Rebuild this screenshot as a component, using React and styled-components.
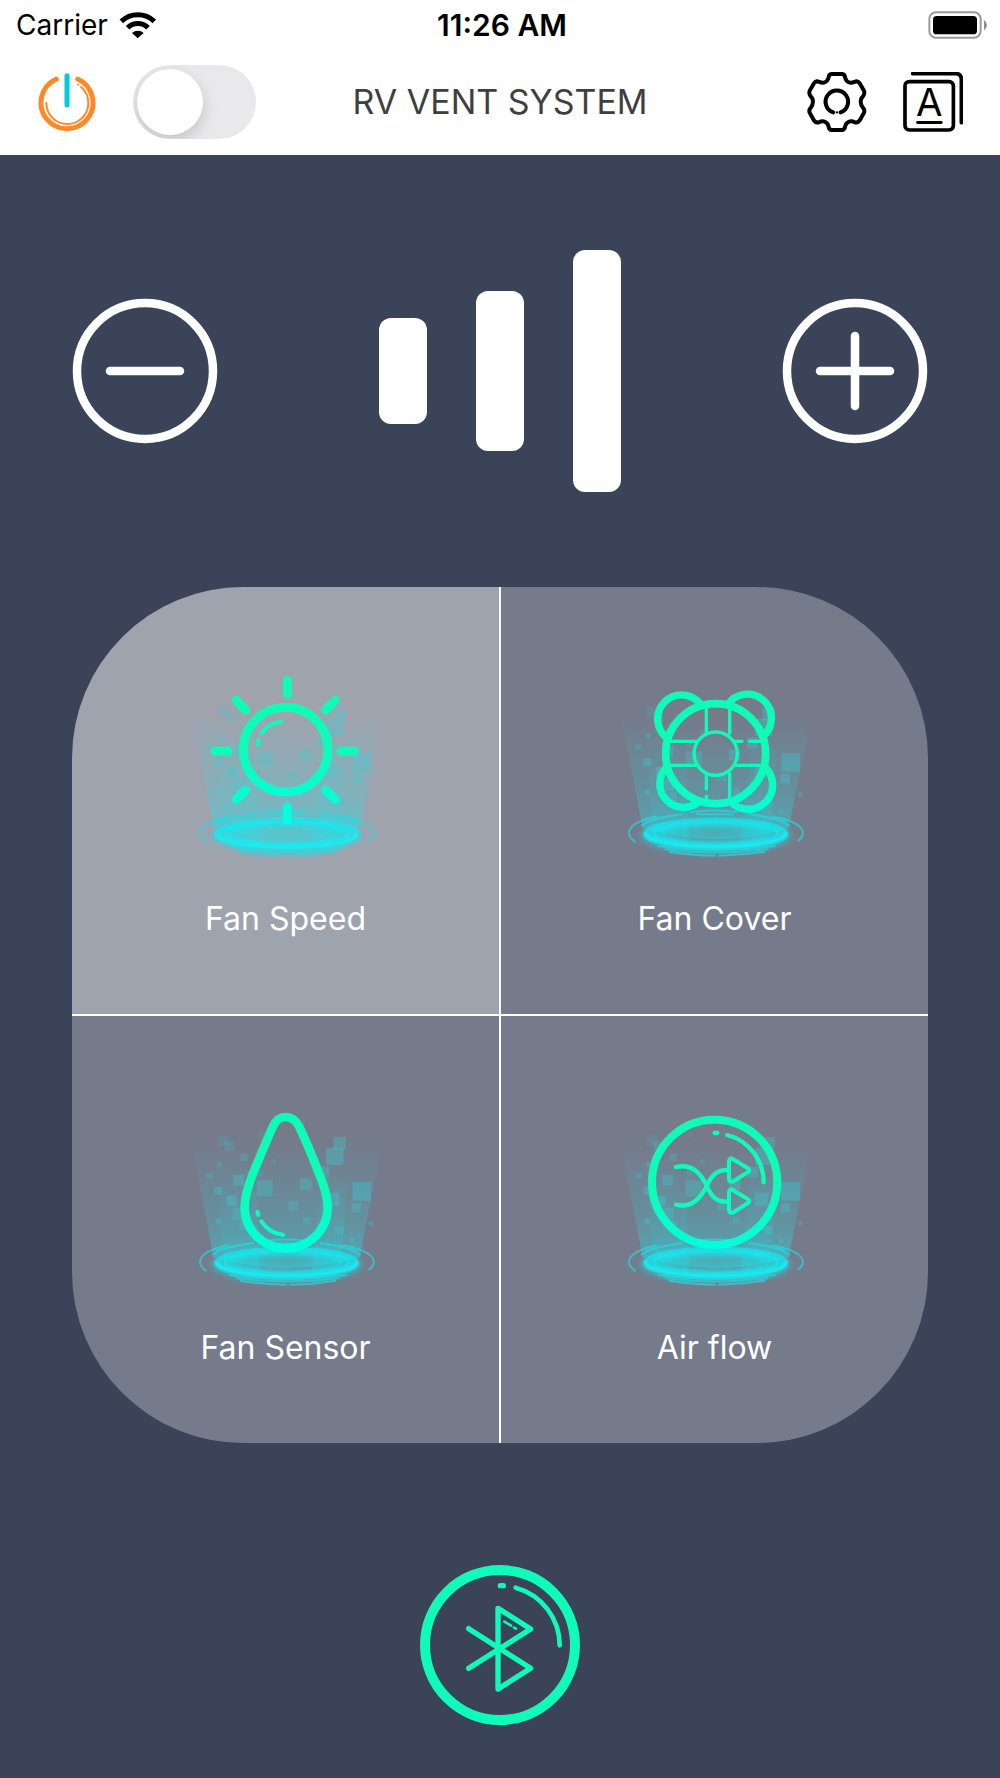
import React, { useState } from 'react';
import styled, { createGlobalStyle } from 'styled-components';

const GlobalStyle = createGlobalStyle`
    * {
        box-sizing: border-box;
    }

    body {
        margin: 0;
        background-color: #3b4358;
        font-family: Inter, "Liberation Sans", sans-serif;
    }

    button {
        padding: 0;
        border: 0;
        background: none;
        color: inherit;
        font: inherit;
        cursor: pointer;
    }

    svg {
        display: block;
        flex: none;
    }
`;

const Page = styled.div`
    display: flex;
    flex-direction: column;
    min-height: 100vh;
    background-color: #3b4358;
`;

const Top = styled.header`
    padding-bottom: 1px;
    background-color: #fff;
`;

const StatusBar = styled.div`
    display: grid;
    grid-template-columns: 1fr auto 1fr;
    align-items: center;
    height: 50px;
    padding: 0 12px 0 16px;
    color: #000;
    font-size: 28px;
    line-height: 32px;
`;

const Carrier = styled.div`
    display: flex;
    align-items: center;
    gap: 11px;
`;

const Clock = styled.time`
    font-size: 30px;
    font-weight: 600;
`;

const BatterySlot = styled.div`
    display: flex;
    justify-content: flex-end;
`;

const Nav = styled.nav`
    display: grid;
    grid-template-columns: 1fr auto 1fr;
    align-items: center;
    height: 104px;
    padding: 0 37px;
`;

const NavSide = styled.div`
    display: flex;
    align-items: center;
    justify-content: ${(props) => (props.$end ? 'flex-end' : 'flex-start')};
    gap: 36px;
`;

const Title = styled.h1`
    margin: 0;
    color: #3f3f3f;
    font-size: 34px;
    font-weight: 400;
    line-height: 44px;
`;

const Switch = styled.input`
    appearance: none;
    display: flex;
    align-items: center;
    width: 123px;
    height: 74px;
    margin: 0;
    padding: 0 4px;
    border-radius: 37px;
    background-color: ${(props) => (props.checked ? '#0fffb9' : '#e9e9eb')};
    overflow: hidden;
    cursor: pointer;

    &::before {
        content: '';
        width: 66px;
        height: 66px;
        margin-left: ${(props) => (props.checked ? 'auto' : '0')};
        border-radius: 50%;
        background-color: #fff;
        box-shadow: 0 6px 16px rgba(0, 0, 0, 0.16);
    }
`;

const Level = styled.section`
    display: flex;
    align-items: center;
    justify-content: space-between;
    height: 432px;
    padding: 0 72px;
`;

const Bars = styled.div`
    display: flex;
    align-items: center;
    gap: 49px;
`;

const Bar = styled.div`
    width: 48px;
    height: ${(props) => props.$height}px;
    border-radius: 12px;
    background-color: #fff;
`;

const Panel = styled.section`
    display: grid;
    grid-template-columns: 1fr 1fr;
    grid-template-rows: 1fr 1fr;
    gap: 2px;
    aspect-ratio: 1;
    margin: 0 72px;
    border-radius: 20%;
    background: linear-gradient(#fff, #fff) center / 2px 100% no-repeat,
        linear-gradient(#fff, #fff) center / 100% 2px no-repeat;
    overflow: hidden;
`;

const Tile = styled.button`
    display: flex;
    flex-direction: column;
    align-items: center;
    justify-content: flex-start;
    gap: 28px;
    padding-top: 62px;
    background-color: ${(props) => (props.$active ? '#9fa3ae' : '#757b8b')};
    color: #fff;
    font-size: 32px;
    font-weight: 400;
    line-height: 44px;
`;

const Footer = styled.footer`
    display: flex;
    justify-content: center;
    padding: 122px 0 53px;
`;

const WifiIcon = () => (
    <svg width="38" height="28" viewBox="359 29 114 84" fill="none" stroke="#000" strokeWidth="15">
        <path d="M366 60a71 71 0 0 1 99 0" />
        <path d="M385 79a43 43 0 0 1 61 0" />
        <path d="M415 111L398 95a26 26 0 0 1 35 0z" fill="#000" stroke="none" />
    </svg>
);

const BatteryIcon = () => (
    <svg width="60" height="28" viewBox="774 30 180 84">
        <rect x="778" y="34" width="154" height="76" rx="20" fill="none" stroke="#9b9b9b" strokeWidth="6" />
        <rect x="789" y="45" width="132" height="55" rx="11" />
        <path d="M942 57Q951 64 951 72Q951 80 942 88z" fill="#8b8b8b" />
    </svg>
);

const PowerIcon = () => (
    <svg width="60" height="60" viewBox="109 215 180 180" fill="none" stroke="#ff8829" strokeLinecap="round">
        <path d="M167 236A78 78 0 1 0 231 236" strokeWidth="15" />
        <path d="M137 308A63 63 0 0 0 263 308A63 63 0 0 0 241 260" strokeWidth="6" />
        <path d="M232 253h.1" strokeWidth="6" />
        <path d="M199 226V314" stroke="#00cddc" strokeWidth="15" />
    </svg>
);

const GearIcon = () => (
    <svg width="60" height="60" viewBox="411 215 181 181" fill="none" stroke="#000" strokeWidth="12" strokeLinecap="round">
        <path d="M485 221H517Q525 222 526 232Q529 244 540 247Q547 248 554 245Q564 240 570 249L583 272Q586 280 580 288Q573 294 573 305Q573 316 580 323Q586 330 583 338L570 361Q564 370 554 366Q547 362 540 364Q529 367 526 379Q525 389 517 390H485Q477 389 476 379Q473 367 462 364Q455 362 448 366Q438 370 432 361L419 338Q416 330 422 323Q429 316 429 305Q429 294 422 288Q416 280 419 272L432 249Q438 240 448 245Q455 248 462 247Q473 244 476 232Q477 222 485 221z" />
        <path d="M490 337A34 34 0 1 1 512 337" />
        <path d="M501 337h.1" strokeWidth="7" />
    </svg>
);

const LanguageIcon = () => (
    <svg width="60" height="60" viewBox="700 215 181 181" fill="none" stroke="#000" strokeWidth="11" strokeLinecap="round">
        <rect x="706" y="244" width="146" height="146" rx="13" />
        <path d="M729 220H859Q876 220 876 237V368" />
        <path d="M744 367H815" strokeWidth="9" />
        <text x="779" y="348" textAnchor="middle" fill="#000" stroke="none" fontSize="116">A</text>
    </svg>
);

const RoundIcon = ({ plus }) => (
    <svg width="146" height="146" viewBox="0 0 146 146" fill="none" stroke="#fff" strokeWidth="8.5" strokeLinecap="round">
        <circle cx="73" cy="73" r="68" />
        <path d="M38 73H108" />
        {plus && <path d="M73 38V108" />}
    </svg>
);

const BluetoothIcon = () => (
    <svg width="160" height="160" viewBox="61 46 480 480" fill="none" stroke="#10fbb9" strokeLinecap="round" strokeLinejoin="round">
        <circle cx="301" cy="286" r="225" strokeWidth="30" />
        <path d="M302 108H311M207 237L393 356L295 418V176L393 238L207 356" strokeWidth="16" />
        <path d="M348 114A179 179 0 0 1 480 287" strokeWidth="14" />
        <path d="M314 216L334 228M343 234L349 237" strokeWidth="8" />
    </svg>
);

// x, y, size, opacity
const pixels = [
    [115, 169, 32, 0.15], [135, 186, 30, 0.2], [183, 224, 22, 0.25], [112, 249, 16, 0.25],
    [82, 281, 18, 0.25], [105, 324, 24, 0.3], [162, 288, 32, 0.3], [142, 350, 30, 0.35],
    [160, 386, 36, 0.3], [109, 419, 16, 0.35], [237, 160, 16, 0.1], [275, 241, 14, 0.2],
    [232, 304, 48, 0.3], [235, 276, 16, 0.2], [362, 298, 34, 0.3], [328, 366, 28, 0.25],
    [372, 414, 22, 0.25], [462, 174, 38, 0.3], [440, 206, 52, 0.35], [416, 262, 34, 0.3],
    [519, 309, 56, 0.35], [517, 372, 28, 0.3], [440, 341, 40, 0.3], [467, 441, 26, 0.25],
    [568, 426, 14, 0.25], [512, 476, 14, 0.25], [180, 426, 26, 0.25],
];

const Hologram = ({ id, children }) => (
    <svg width="220" height="220" viewBox="-10 -3 660 660" fill="none" strokeLinecap="round" strokeLinejoin="round">
        <defs>
            <linearGradient id={`${id}-line`} gradientUnits="userSpaceOnUse" x1="0" y1="300" x2="0" y2="520">
                <stop offset="0" stopColor="#10fbb7" />
                <stop offset="1" stopColor="#00ffe6" />
            </linearGradient>
            <linearGradient id={`${id}-beam`} gradientUnits="userSpaceOnUse" x1="0" y1="200" x2="0" y2="580">
                <stop offset="0" stopColor="#22e0e6" stopOpacity="0" />
                <stop offset="0.6" stopColor="#22e0e6" stopOpacity="0.22" />
                <stop offset="1" stopColor="#22e0e6" stopOpacity="0.5" />
            </linearGradient>
            <radialGradient id={`${id}-disc`}>
                <stop offset="0" stopColor="#22d5dc" stopOpacity="0.05" />
                <stop offset="0.5" stopColor="#1fe2e8" stopOpacity="0.35" />
                <stop offset="0.8" stopColor="#15e8ee" stopOpacity="0.6" />
                <stop offset="1" stopColor="#12ecf2" stopOpacity="0.65" />
            </radialGradient>
            <filter id={`${id}-glow`} x="-20%" y="-60%" width="140%" height="220%">
                <feGaussianBlur stdDeviation="9" />
            </filter>
            <filter id={`${id}-soft`} x="-10%" y="-30%" width="120%" height="160%">
                <feGaussianBlur stdDeviation="3" />
            </filter>
        </defs>
        <g fill={`url(#${id}-beam)`}>
            <path d="M38 200H607L541 535Q322 600 103 535z" />
            <path d="M112 260L136 570Q180 585 222 585L206 260z" opacity="0.35" />
            <path d="M212 340L222 586H243L232 340z" opacity="0.5" />
            <path d="M428 300L396 586Q450 580 482 560L508 300z" opacity="0.5" />
        </g>
        <g fill="#38cfd8">
            {pixels.map(([x, y, size, opacity]) => (
                <rect key={`${x}-${y}`} x={x} y={y} width={size} height={size} opacity={opacity} />
            ))}
        </g>
        <ellipse cx="322" cy="556" rx="214" ry="40" stroke="#16e4ec" strokeWidth="24" opacity="0.45" filter={`url(#${id}-glow)`} />
        <ellipse cx="322" cy="548" rx="216" ry="45" fill={`url(#${id}-disc)`} />
        <g stroke="#15edf3" filter={`url(#${id}-soft)`}>
            <path d="M112 552A210 40 0 0 0 532 552" strokeWidth="14" opacity="0.9" />
            <ellipse cx="322" cy="549" rx="186" ry="34" strokeWidth="7" opacity="0.6" />
            <ellipse cx="322" cy="549" rx="164" ry="26" strokeWidth="5" opacity="0.4" />
        </g>
        <g stroke="#22dde4" strokeLinecap="butt" strokeWidth="6" opacity="0.65">
            <path d="M82 577C44 550 58 518 145 499" />
            <path d="M568 573C604 545 578 515 490 499" />
            <path d="M98 528Q130 505 222 492M422 492Q510 505 544 528" />
            <path d="M110 516Q150 502 200 496M440 496Q500 502 532 516" />
            <path d="M246 487Q322 476 388 487M262 493H376" />
            <path d="M148 588Q322 612 502 588" />
            <path d="M170 597Q322 618 480 597" />
            <path d="M182 605Q250 616 322 617M330 617Q400 616 470 605" />
        </g>
        <g stroke={`url(#${id}-line)`}>{children}</g>
    </svg>
);

const SpeedArt = () => (
    <Hologram id="speed">
        <circle cx="319" cy="299" r="127" strokeWidth="27" />
        <path
            d="M324 91V132M324 470V511M106 303H146M485 303H525M171 151L199 180M467 151L439 180M199 420L171 448M439 420L467 448"
            strokeWidth="27"
        />
        <path d="M307 216Q264 218 246 252M237 270L236 285" strokeWidth="12" />
    </Hologram>
);

const CoverArt = () => (
    <Hologram id="cover">
        <g transform="translate(-25 60)">
            <circle cx="347" cy="251" r="150" strokeWidth="23" />
            <path
                d="M204 206A72 72 0 1 1 305 107M382 105A72 72 0 1 1 488 200M202 289A71 71 0 1 0 299 393M492 289A73 73 0 1 1 391 394"
                strokeWidth="22"
            />
            <circle cx="347" cy="251" r="65" strokeWidth="10" />
            <path
                d="M319 108V190M319 312V357M319 379V395M389 108V190M389 312V395M205 214H290M402 214H426M448 214H490M203 286H290M402 286H492"
                strokeWidth="10"
            />
        </g>
    </Hologram>
);

const SensorArt = () => (
    <Hologram id="sensor">
        <g transform="translate(0 36)">
            <path
                d="M319 78C338 78 351 90 360 108C384 158 403 206 420 250C435 286 445 318 445 349C445 418 388 472 320 472C252 472 196 418 196 349C196 318 206 286 220 250C238 206 258 158 280 108C288 90 300 78 319 78z"
                strokeWidth="26"
            />
            <path d="M234 363L237 372M246 391Q268 425 311 432" strokeWidth="12" />
        </g>
    </Hologram>
);

const AirflowArt = () => (
    <Hologram id="airflow">
        <g transform="translate(-25 36)">
            <circle cx="344" cy="274" r="188" strokeWidth="24" />
            <path
                d="M344 126H352M382 132A147 147 0 0 1 491 274M228 228C272 218 300 240 320 285C336 320 350 332 382 332M228 341C272 352 300 326 320 285C336 251 350 237 382 237"
                strokeWidth="13"
            />
            <path
                d="M398 204L444 232Q452 238 444 243L400 271Q388 276 387 264V211Q388 198 398 204zM398 297L444 325Q452 331 444 336L400 364Q388 369 387 357V304Q388 291 398 297z"
                strokeWidth="12"
            />
        </g>
    </Hologram>
);

const tiles = [
    { name: 'Fan Speed', Art: SpeedArt },
    { name: 'Fan Cover', Art: CoverArt },
    { name: 'Fan Sensor', Art: SensorArt },
    { name: 'Air flow', Art: AirflowArt },
];

const heights = [106, 160, 242];

export default function App() {
    const [power, setPower] = useState(false);
    const [level, setLevel] = useState(3);
    const [active, setActive] = useState('Fan Speed');

    return (
        <Page>
            <GlobalStyle />
            <Top>
                <StatusBar>
                    <Carrier>
                        Carrier
                        <WifiIcon />
                    </Carrier>
                    <Clock>11:26 AM</Clock>
                    <BatterySlot>
                        <BatteryIcon />
                    </BatterySlot>
                </StatusBar>
                <Nav>
                    <NavSide>
                        <PowerIcon />
                        <Switch
                            type="checkbox"
                            role="switch"
                            aria-label="Power"
                            checked={power}
                            onChange={(e) => setPower(e.target.checked)}
                        />
                    </NavSide>
                    <Title>RV VENT SYSTEM</Title>
                    <NavSide $end>
                        <button type="button" aria-label="Settings">
                            <GearIcon />
                        </button>
                        <button type="button" aria-label="Language">
                            <LanguageIcon />
                        </button>
                    </NavSide>
                </Nav>
            </Top>

            <Level>
                <button type="button" aria-label="Decrease" onClick={() => setLevel(Math.max(1, level - 1))}>
                    <RoundIcon />
                </button>
                <Bars>
                    {heights.slice(0, level).map((height) => (
                        <Bar key={height} $height={height} />
                    ))}
                </Bars>
                <button type="button" aria-label="Increase" onClick={() => setLevel(Math.min(3, level + 1))}>
                    <RoundIcon plus />
                </button>
            </Level>

            <Panel>
                {tiles.map(({ name, Art }) => (
                    <Tile key={name} type="button" $active={name === active} onClick={() => setActive(name)}>
                        <Art />
                        {name}
                    </Tile>
                ))}
            </Panel>

            <Footer>
                <button type="button" aria-label="Bluetooth">
                    <BluetoothIcon />
                </button>
            </Footer>
        </Page>
    );
}
